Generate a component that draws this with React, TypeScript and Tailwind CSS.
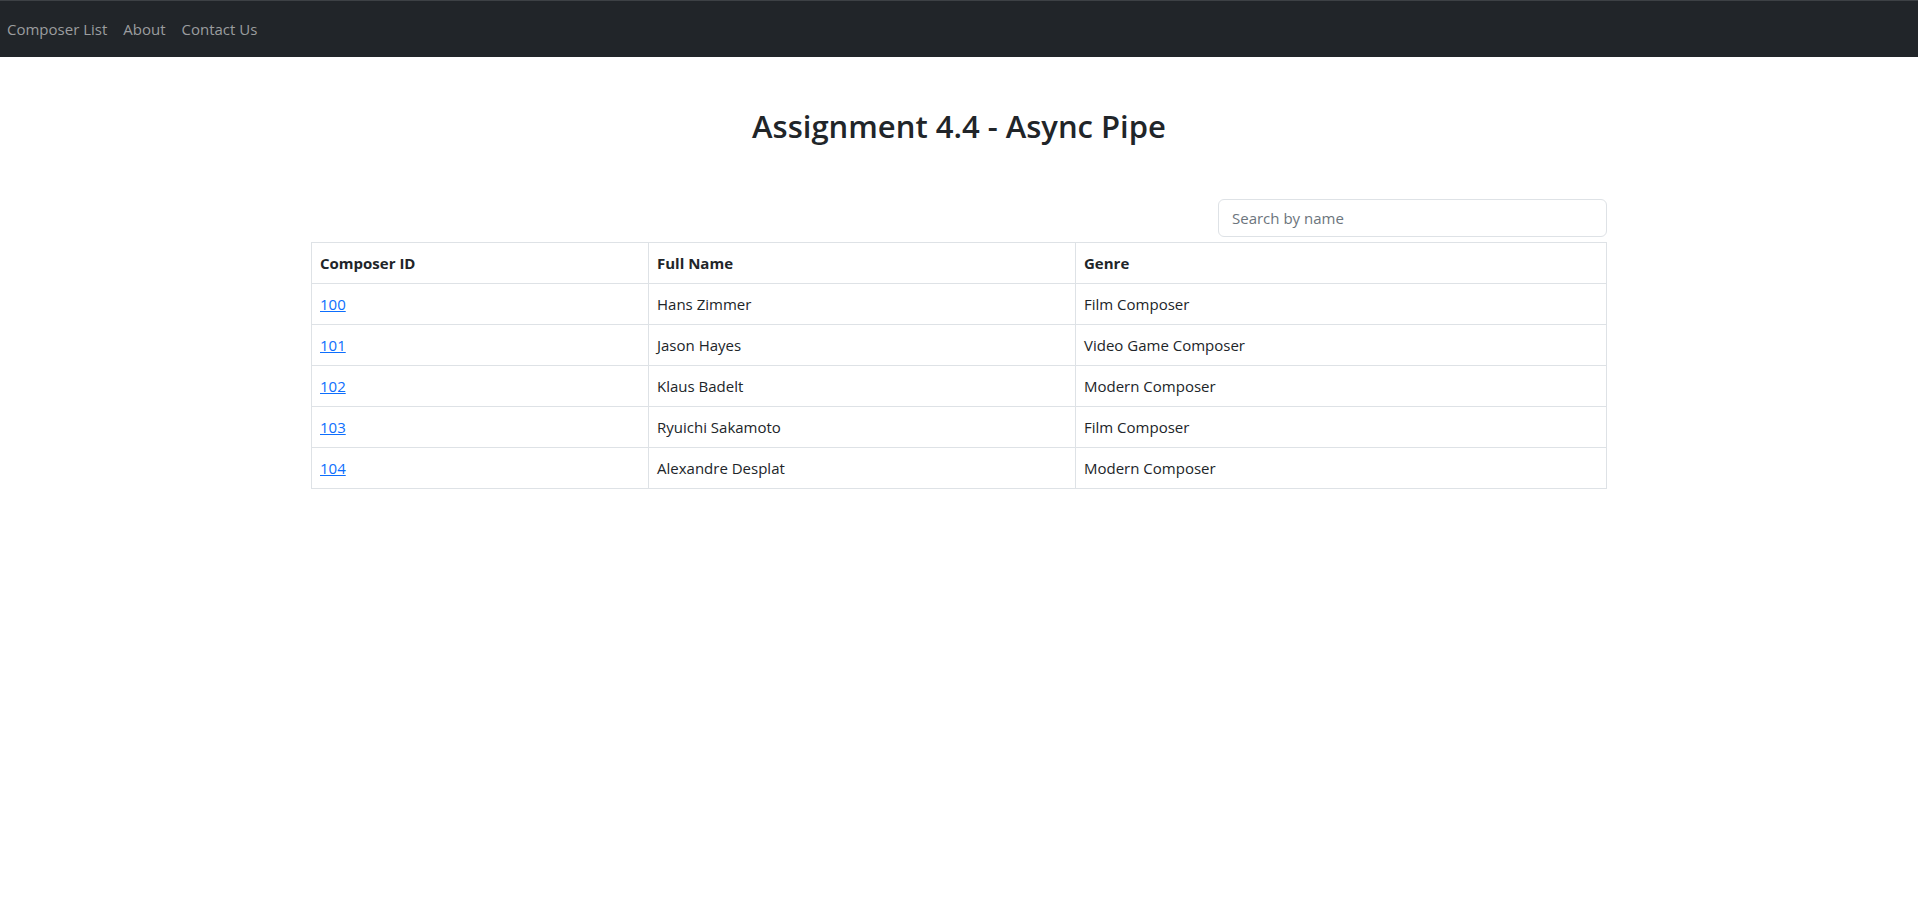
const composers = [
  { id: 100, name: "Hans Zimmer", genre: "Film Composer" },
  { id: 101, name: "Jason Hayes", genre: "Video Game Composer" },
  { id: 102, name: "Klaus Badelt", genre: "Modern Composer" },
  { id: 103, name: "Ryuichi Sakamoto", genre: "Film Composer" },
  { id: 104, name: "Alexandre Desplat", genre: "Modern Composer" },
];

export default function App() {
  return (
    <div className="min-h-screen bg-white text-[#212529] font-['Open_Sans',sans-serif] text-base">
      <nav className="h-[57px] bg-[#212529] border-t border-[#3d4145] flex items-center px-[7px]">
        <div className="flex items-center gap-4 text-[#9b9d9f] text-[15px]">
          <a href="#" className="hover:text-white">Composer List</a>
          <a href="#" className="hover:text-white">About</a>
          <a href="#" className="hover:text-white">Contact Us</a>
        </div>
      </nav>

      <main className="max-w-[1320px] mx-auto px-3">
        <h2 className="text-center text-[31px] font-semibold leading-[1.2] mt-[51px] mb-[54px]">
          Assignment 4.4 - Async Pipe
        </h2>

        <div className="flex justify-end mb-[5px]">
          <input
            type="text"
            placeholder="Search by name"
            className="w-[389px] h-[38px] px-[13px] border border-[#dee2e6] rounded-[6px] text-[15px] placeholder:text-[#6c757d] outline-none"
          />
        </div>

        <table className="w-full border-collapse border border-[#dee2e6] text-[15px]">
          <thead>
            <tr>
              <th className="w-[337px] text-left font-bold border border-[#dee2e6] px-2 h-[41px]">Composer ID</th>
              <th className="w-[427px] text-left font-bold border border-[#dee2e6] px-2 h-[41px]">Full Name</th>
              <th className="text-left font-bold border border-[#dee2e6] px-2 h-[41px]">Genre</th>
            </tr>
          </thead>
          <tbody>
            {composers.map((c) => (
              <tr key={c.id}>
                <td className="border border-[#dee2e6] px-2 h-[41px]">
                  <a href="#" className="text-[#0d6efd] underline">{c.id}</a>
                </td>
                <td className="border border-[#dee2e6] px-2 h-[41px]">{c.name}</td>
                <td className="border border-[#dee2e6] px-2 h-[41px]">{c.genre}</td>
              </tr>
            ))}
          </tbody>
        </table>
      </main>
    </div>
  );
}
